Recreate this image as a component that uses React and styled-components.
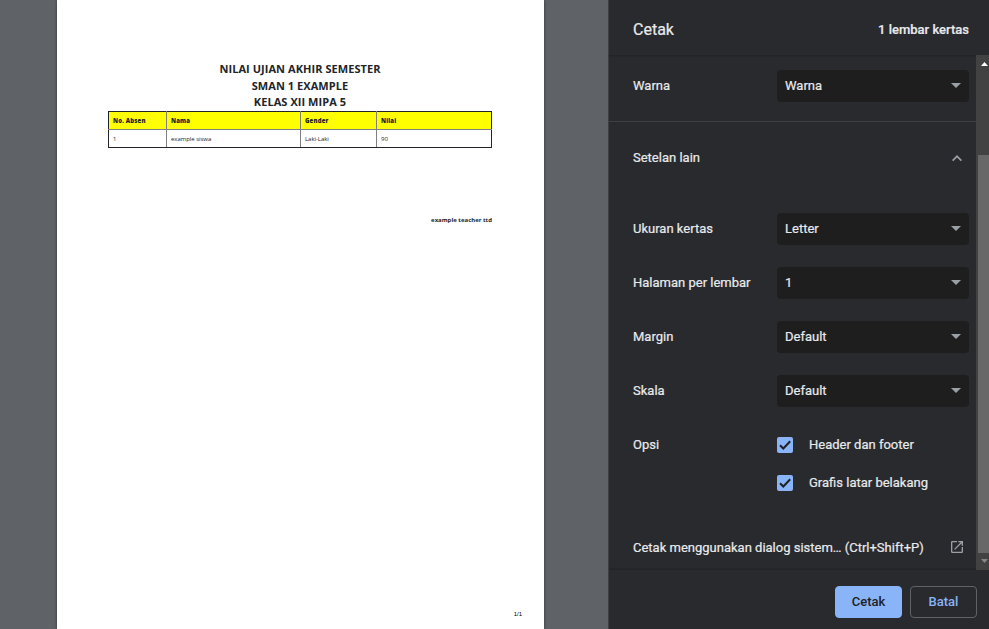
import React from 'react';
import styled, { createGlobalStyle } from 'styled-components';

const GlobalStyle = createGlobalStyle`
  * { box-sizing: border-box; }
  body { margin: 0; overflow: hidden; background: #292a2d; }
`;

const Window = styled.div`
  display: flex;
  width: 989px;
  height: 629px;
  overflow: hidden;
  font-family: Roboto, sans-serif;
  font-size: 13px;
  color: #e8eaed;
`;

const Preview = styled.main`
  width: 608px;
  height: 100%;
  padding-left: 57px;
  background: #5f6368;
`;

const Paper = styled.article`
  display: flex;
  flex-direction: column;
  width: 487px;
  height: 100%;
  padding: 61px 52px 0 51px;
  background: #fff;
  color: #212529;
  font-family: "Open Sans", "Noto Sans", sans-serif;
  box-shadow: 0 0 3px rgba(0, 0, 0, 0.5);
`;

const Title = styled.h1`
  margin: 0;
  text-align: center;
  font-size: 11px;
  line-height: 16.5px;
  font-weight: 700;
  letter-spacing: 0.06px;
`;

const Grades = styled.table`
  width: 383px;
  margin-top: 0.5px;
  table-layout: fixed;
  border-collapse: collapse;
  border: 1px solid #212529;
  font-size: 6px;
  line-height: 9px;
`;

const Cell = styled.td`
  width: ${(p) => p.$width}px;
  height: 18px;
  padding: 1px 3px 0 4px;
  border: 1px solid #808080;
  border-top-color: ${(p) => (p.$head ? '#212529' : '#808080')};
  border-bottom-color: ${(p) => (p.$head ? '#808080' : '#212529')};
  &:first-child { border-left-color: #212529; }
  &:last-child { border-right-color: #212529; }
  background: ${(p) => (p.$head ? '#ff0' : '#fff')};
  font-weight: ${(p) => (p.$head ? 800 : 400)};
  letter-spacing: ${(p) => (p.$head ? 0.16 : -0.04)}px;
  text-align: left;
  white-space: nowrap;
`;

const Signature = styled.p`
  margin: 68px 0 0;
  text-align: right;
  font-size: 6px;
  line-height: 9px;
  font-weight: 700;
`;

const PageNumber = styled.footer`
  margin: auto -30px 9px 0;
  text-align: right;
  font: 6px/11px "Liberation Sans", sans-serif;
  color: #000;
`;

const Sidebar = styled.aside`
  display: flex;
  flex-direction: column;
  width: 381px;
  height: 100%;
  border-left: 1px solid #3c4043;
  background: #292a2d;
  -webkit-text-stroke: 0.2px currentColor;
`;

const Header = styled.header`
  display: flex;
  align-items: center;
  justify-content: space-between;
  height: 55px;
  padding: 4px 20px 0 24px;
`;

const Heading = styled.h2`
  margin: 0;
  font-size: 16px;
  font-weight: 400;
`;

const SheetCount = styled.span`
  font-weight: 500;
`;

const Body = styled.div`
  display: flex;
  height: 515px;
`;

const Settings = styled.div`
  width: 367px;
  height: 515px;
  background: linear-gradient(#222326, #292a2d 3px, #292a2d 512px, #222326);
`;

const Section = styled.section`
  height: ${(p) => p.$height}px;
  padding-top: ${(p) => p.$top || 0}px;
  border-bottom: ${(p) => (p.$divider ? '1px solid #3c4043' : '0')};
`;

const Row = styled.div`
  display: flex;
  align-items: center;
  height: ${(p) => p.$height || 54}px;
  padding: 0 7px 0 24px;
`;

const Label = styled.span`
  width: 144px;
  flex: none;
  padding-bottom: 2px;
  white-space: nowrap;
`;

const OptionText = styled.span`
  padding-bottom: 2px;
  white-space: nowrap;
`;

const Select = styled.button`
  display: flex;
  align-items: center;
  justify-content: space-between;
  width: 192px;
  height: 32px;
  padding: 0 8px 2px;
  border: 0;
  border-radius: 4px;
  background: #1e1e1f;
  color: inherit;
  font: inherit;
`;

const Caret = styled.svg`
  width: 10px;
  height: 5px;
  fill: #9aa0a6;
`;

const LinkRow = styled(Row)`
  justify-content: space-between;
  padding-right: 11px;
  white-space: nowrap;
`;

const Icon = styled.svg`
  width: 16px;
  height: 16px;
  flex: none;
  fill: #9aa0a6;
`;

const Checkbox = styled.span`
  display: flex;
  width: 16px;
  height: 16px;
  margin-right: 16px;
  border-radius: 2px;
  background: #8ab4f8;
`;

const Scrollbar = styled.div`
  display: flex;
  flex-direction: column;
  align-items: center;
  width: 13px;
  height: 515px;
  padding: 7px 0 7px 2px;
  background: #424242;
`;

const Arrow = styled.svg`
  width: 7px;
  height: 4px;
  margin-left: 2px;
  fill: ${(p) => p.$color};
`;

const Thumb = styled.div`
  width: 11px;
  height: 398px;
  margin: auto 0 6px;
  background: #686868;
`;

const Footer = styled.footer`
  display: flex;
  justify-content: flex-end;
  gap: 8px;
  height: 59px;
  padding: 16px 12px 0 0;
`;

const Button = styled.button`
  width: 67px;
  height: 32px;
  padding: 0 0 2px;
  border: 1px solid ${(p) => (p.$primary ? '#8ab4f8' : '#5f6368')};
  border-radius: 4px;
  background: ${(p) => (p.$primary ? '#8ab4f8' : 'transparent')};
  color: ${(p) => (p.$primary ? '#202124' : '#8ab4f8')};
  font: 500 13px Roboto, sans-serif;
  -webkit-text-stroke: 0;
`;

const columns = [
  { name: 'No. Absen', value: '1', width: 58 },
  { name: 'Nama', value: 'example siswa', width: 134 },
  { name: 'Gender', value: 'Laki-Laki', width: 76 },
  { name: 'Nilai', value: '90', width: 115 },
];

const selects = [
  ['Ukuran kertas', 'Letter'],
  ['Halaman per lembar', '1'],
  ['Margin', 'Default'],
  ['Skala', 'Default'],
];

function SelectRow({ label, value }) {
  return (
    <Row>
      <Label>{label}</Label>
      <Select>
        {value}
        <Caret viewBox="0 0 10 5"><path d="M0 0h10L5 5z" /></Caret>
      </Select>
    </Row>
  );
}

function CheckRow({ label, text }) {
  return (
    <Row $height={38}>
      <Label>{label}</Label>
      <Checkbox>
        <svg width="16" height="16" viewBox="0 0 16 16">
          <path d="M3 8.2 6.3 11.5 13.2 4.2" fill="none" stroke="#202124" strokeWidth="2" />
        </svg>
      </Checkbox>
      <OptionText>{text}</OptionText>
    </Row>
  );
}

export default function App() {
  return (
    <Window>
      <GlobalStyle />
      <Preview>
        <Paper>
          <Title>NILAI UJIAN AKHIR SEMESTER</Title>
          <Title>SMAN 1 EXAMPLE</Title>
          <Title>KELAS XII MIPA 5</Title>
          <Grades>
            <tbody>
              <tr>{columns.map((c) => <Cell as="th" $head key={c.name} $width={c.width}>{c.name}</Cell>)}</tr>
              <tr>{columns.map((c) => <Cell key={c.name} $width={c.width}>{c.value}</Cell>)}</tr>
            </tbody>
          </Grades>
          <Signature>example teacher ttd</Signature>
          <PageNumber>1/1</PageNumber>
        </Paper>
      </Preview>
      <Sidebar>
        <Header>
          <Heading>Cetak</Heading>
          <SheetCount>1 lembar kertas</SheetCount>
        </Header>
        <Body>
          <Settings>
            <Section $height={67} $top={4} $divider>
              <SelectRow label="Warna" value="Warna" />
            </Section>
            <Section $height={80} $top={12}>
              <LinkRow $height={48}>
                <OptionText>Setelan lain</OptionText>
                <Icon viewBox="0 0 16 16"><path d="M8 5 3 10l1.2 1.2L8 7.4l3.8 3.8L13 10z" /></Icon>
              </LinkRow>
            </Section>
            <Section $height={315}>
              {selects.map(([label, value]) => <SelectRow key={label} label={label} value={value} />)}
              <Section $height={90} $top={8}>
                <CheckRow label="Opsi" text="Header dan footer" />
                <CheckRow text="Grafis latar belakang" />
              </Section>
            </Section>
            <LinkRow $height={60}>
              Cetak menggunakan dialog sistem… (Ctrl+Shift+P)
              <Icon viewBox="0 0 24 24">
                <path d="M19 19H5V5h7V3H5a2 2 0 0 0-2 2v14a2 2 0 0 0 2 2h14c1.100 0 2-.9 2-2v-7h-2v7zM14 3v2h3.590l-9.830 9.830 1.410 1.410L19 6.410V10h2V3h-7z" />
              </Icon>
            </LinkRow>
          </Settings>
          <Scrollbar>
            <Arrow viewBox="0 0 7 4" $color="#fff"><path d="M0 4h7L3.500 0z" /></Arrow>
            <Thumb />
            <Arrow viewBox="0 0 7 4" $color="#868686"><path d="M0 0h7L3.500 4z" /></Arrow>
          </Scrollbar>
        </Body>
        <Footer>
          <Button $primary>Cetak</Button>
          <Button>Batal</Button>
        </Footer>
      </Sidebar>
    </Window>
  );
}
